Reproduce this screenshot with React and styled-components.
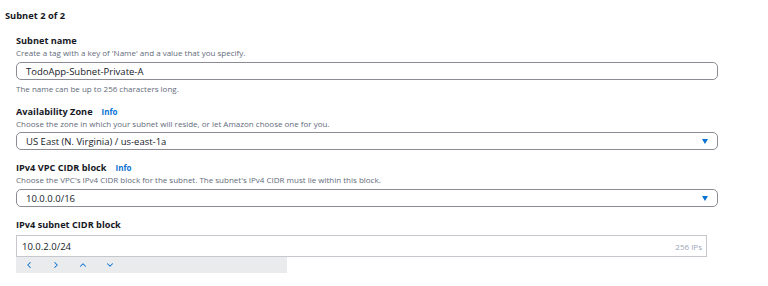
import React from "react";
import styled, { createGlobalStyle } from "styled-components";
import { ChevronLeft, ChevronRight, ChevronUp, ChevronDown } from "lucide-react";

const GlobalStyle = createGlobalStyle`
  html, body {
    margin: 0;
    padding: 0;
    background: #ffffff;
  }
  body {
    font-family: "Open Sans", "Noto Sans", Arial, sans-serif;
    color: #16191f;
  }
`;

const Page = styled.div`
  width: 768px;
  height: 286px;
  overflow: hidden;
  padding-top: 9px;
  box-sizing: border-box;
`;

const Title = styled.h2`
  margin: 0 0 0 5px;
  font-size: 9.3px;
  line-height: 13px;
  font-weight: 700;
`;

const Fields = styled.div`
  padding-left: 16px;
  margin-top: 13px;
  display: flex;
  flex-direction: column;
`;

const Field = styled.div`
  display: flex;
  flex-direction: column;
  margin-bottom: ${(p) => p.$gap || 0}px;
`;

const Label = styled.div`
  display: flex;
  align-items: baseline;
  gap: 9px;
  font-size: 9.2px;
  line-height: 12px;
  font-weight: 700;
  color: #16191f;
`;

const InfoLink = styled.span`
  font-size: 8px;
  font-weight: 700;
  color: #0972d3;
`;

const Description = styled.div`
  font-size: 8px;
  line-height: 11px;
  color: #5f6b7a;
`;

const Control = styled.div`
  box-sizing: border-box;
  width: ${(p) => p.$width}px;
  height: ${(p) => p.$height}px;
  margin-top: ${(p) => p.$top || 0}px;
  display: flex;
  align-items: center;
  justify-content: space-between;
  padding: 0 ${(p) => (p.$square ? 4 : 9)}px 0 ${(p) => (p.$square ? 5 : 9)}px;
  border: 1px solid ${(p) => (p.$square ? "#c6c6cd" : "#8c8c94")};
  border-radius: ${(p) => (p.$square ? 0 : 5)}px;
  font-size: 9.5px;
  color: #16191f;
`;

const Caret = styled.span`
  width: 0;
  height: 0;
  border-left: 3.5px solid transparent;
  border-right: 3.5px solid transparent;
  border-top: 5px solid #0972d3;
`;

const Counter = styled.span`
  font-size: 8px;
  color: #9ba7b6;
`;

const Helper = styled.div`
  margin-top: 3px;
  font-size: 8px;
  line-height: 11px;
  color: #5f6b7a;
`;

const Pager = styled.div`
  width: 271px;
  height: 16px;
  background: #e9ebed;
  display: flex;
  align-items: center;
  padding-left: 8px;
  gap: 17px;
  box-sizing: border-box;
  color: #0972d3;
`;

export default function App() {
  return (
    <Page>
      <GlobalStyle />
      <Title>Subnet 2 of 2</Title>
      <Fields>
        <Field $gap={12}>
          <Label>Subnet name</Label>
          <Description>
            Create a tag with a key of 'Name' and a value that you specify.
          </Description>
          <Control $width={702} $height={18} $top={4}>
            TodoApp-Subnet-Private-A
          </Control>
          <Helper>The name can be up to 256 characters long.</Helper>
        </Field>

        <Field $gap={12}>
          <Label>
            Availability Zone<InfoLink>Info</InfoLink>
          </Label>
          <Description>
            Choose the zone in which your subnet will reside, or let Amazon
            choose one for you.
          </Description>
          <Control $width={702} $height={18} $top={3}>
            US East (N. Virginia) / us-east-1a
            <Caret />
          </Control>
        </Field>

        <Field $gap={12}>
          <Label>
            IPv4 VPC CIDR block<InfoLink>Info</InfoLink>
          </Label>
          <Description>
            Choose the VPC's IPv4 CIDR block for the subnet. The subnet's IPv4
            CIDR must lie within this block.
          </Description>
          <Control $width={702} $height={18} $top={4}>
            10.0.0.0/16
            <Caret />
          </Control>
        </Field>

        <Field>
          <Label>IPv4 subnet CIDR block</Label>
          <Control $width={691} $height={22} $top={4} $square>
            10.0.2.0/24
            <Counter>256 IPs</Counter>
          </Control>
          <Pager>
            <ChevronLeft size={10} strokeWidth={2.5} />
            <ChevronRight size={10} strokeWidth={2.5} />
            <ChevronUp size={10} strokeWidth={2.5} />
            <ChevronDown size={10} strokeWidth={2.5} />
          </Pager>
        </Field>
      </Fields>
    </Page>
  );
}
